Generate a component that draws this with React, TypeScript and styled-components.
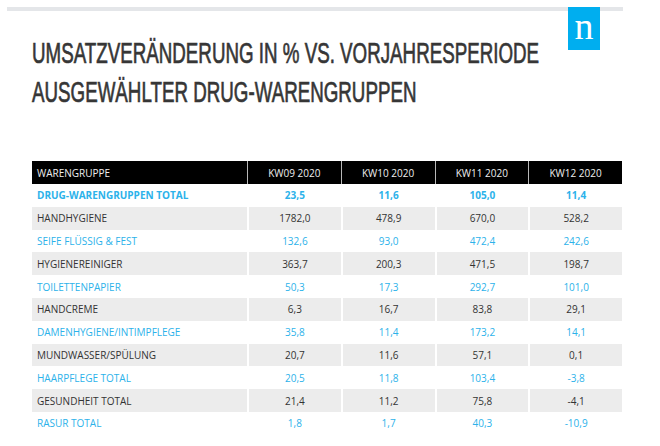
import React, { useLayoutEffect, useRef, useState } from 'react'
import styled, { createGlobalStyle } from 'styled-components'

const GlobalStyle = createGlobalStyle`
  html, body {
    margin: 0;
    padding: 0;
    background: #fff;
  }
  body {
    font-family: "Open Sans", "Liberation Sans", sans-serif;
  }
`

const rows: string[][] = [
  ['DRUG-WARENGRUPPEN TOTAL', '23,5', '11,6', '105,0', '11,4'],
  ['HANDHYGIENE', '1782,0', '478,9', '670,0', '528,2'],
  ['SEIFE FLÜSSIG & FEST', '132,6', '93,0', '472,4', '242,6'],
  ['HYGIENEREINIGER', '363,7', '200,3', '471,5', '198,7'],
  ['TOILETTENPAPIER', '50,3', '17,3', '292,7', '101,0'],
  ['HANDCREME', '6,3', '16,7', '83,8', '29,1'],
  ['DAMENHYGIENE/INTIMPFLEGE', '35,8', '11,4', '173,2', '14,1'],
  ['MUNDWASSER/SPÜLUNG', '20,7', '11,6', '57,1', '0,1'],
  ['HAARPFLEGE TOTAL', '20,5', '11,8', '103,4', '-3,8'],
  ['GESUNDHEIT TOTAL', '21,4', '11,2', '75,8', '-4,1'],
  ['RASUR TOTAL', '1,8', '1,7', '40,3', '-10,9'],
]

const weeks = ['KW09 2020', 'KW10 2020', 'KW11 2020', 'KW12 2020']

const App = () => {
  const lineRef = useRef<HTMLSpanElement>(null)
  const [scale, setScale] = useState(1)

  useLayoutEffect(() => {
    // title font is condensed in the original, squeeze to the same width
    if (lineRef.current) {
      const w = lineRef.current.offsetWidth
      if (w > 0) setScale(507 / w)
    }
  }, [])

  return (
    <Page>
      <GlobalStyle />
      <TopBar>
        <Logo>n</Logo>
      </TopBar>
      <Title style={{ transform: `scaleX(${scale})` }}>
        <span ref={lineRef}>UMSATZVERÄNDERUNG IN % VS. VORJAHRESPERIODE</span>
        <span>AUSGEWÄHLTER DRUG-WARENGRUPPEN</span>
      </Title>
      <Table>
        <HeadRow>
          <HeadCell>WARENGRUPPE</HeadCell>
          {weeks.map((w) => (
            <HeadCell key={w} center>
              {w}
            </HeadCell>
          ))}
        </HeadRow>
        {rows.map((r, i) => (
          <Row key={r[0]} shaded={i % 2 === 1}>
            {r.map((c, j) => (
              <Cell key={j} center={j > 0} blue={i % 2 === 0} bold={i === 0}>
                {c}
              </Cell>
            ))}
          </Row>
        ))}
      </Table>
    </Page>
  )
}

export default App

const Page = styled.div`
  width: 660px;
  height: 446px;
  padding: 7px 0 0 7px;
  box-sizing: border-box;
  overflow: hidden;
`

const TopBar = styled.div`
  position: relative;
  width: 616px;
  height: 4px;
  background: #e4e6e9;
`

const Logo = styled.div`
  position: absolute;
  left: 561px;
  top: 0;
  width: 32px;
  height: 43px;
  background: #00aeef;
  color: #fff;
  font-family: "Liberation Serif", "Times New Roman", serif;
  font-size: 38px;
  line-height: 1;
  display: flex;
  justify-content: center;
  align-items: flex-end;
  padding-bottom: 5px;
  box-sizing: border-box;
`

const Title = styled.h1`
  margin: 23px 0 0 25px;
  display: flex;
  flex-direction: column;
  align-items: flex-start;
  transform-origin: left top;
  font-family: "Liberation Sans Narrow", "Liberation Sans", Arial, sans-serif;
  font-weight: 400;
  font-size: 29px;
  line-height: 39px;
  color: #363636;
  -webkit-text-stroke: 0.7px #363636;
  white-space: nowrap;
  span {
    display: inline-block;
  }
`

const Table = styled.div`
  margin: 49px 0 0 25px;
  width: 590px;
  font-size: 10px;
`

const HeadRow = styled.div`
  display: grid;
  grid-template-columns: 215px repeat(4, 1fr);
  height: 23px;
  background: #000;
  color: #eee;
`

const HeadCell = styled.div<{ center?: boolean }>`
  display: flex;
  align-items: center;
  justify-content: ${(p) => (p.center ? 'center' : 'flex-start')};
  padding: 0 5px;
  & + & {
    border-left: 1px solid #b8b8b8;
  }
`

const Row = styled.div<{ shaded?: boolean }>`
  display: grid;
  grid-template-columns: 215px repeat(4, 1fr);
  height: 22.8px;
  background: ${(p) => (p.shaded ? '#ececec' : '#fff')};
`

const Cell = styled.div<{ center?: boolean; blue?: boolean; bold?: boolean }>`
  display: flex;
  align-items: center;
  justify-content: ${(p) => (p.center ? 'center' : 'flex-start')};
  padding: 0 5px;
  color: ${(p) => (p.blue ? '#2cb2ea' : '#333')};
  font-weight: ${(p) => (p.bold ? 700 : 400)};
  & + & {
    border-left: 2px solid #fff;
  }
`
